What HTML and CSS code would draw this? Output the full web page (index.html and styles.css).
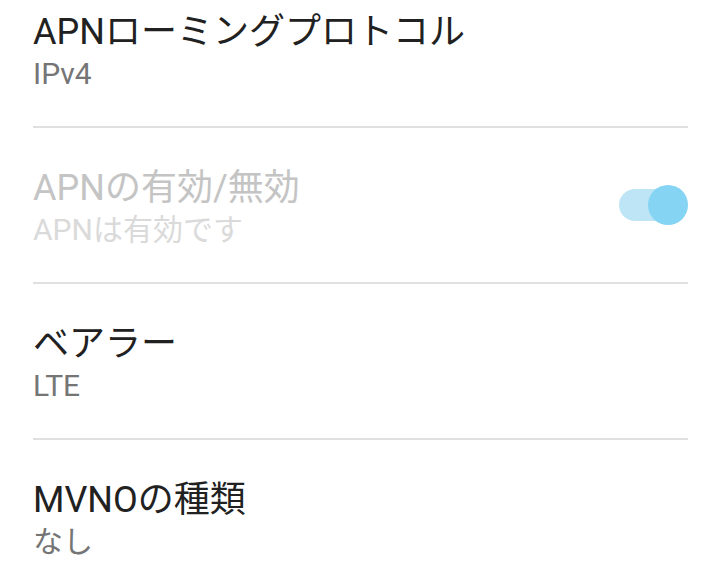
FILE: index.html
```html
<!DOCTYPE html>
<html lang="ja">
<head>
<meta charset="utf-8">
<link rel="stylesheet" href="styles.css">
</head>
<body>
<div class="list">
  <div class="row">
    <div class="text">
      <div class="title">APNローミングプロトコル</div>
      <div class="summary">IPv4</div>
    </div>
  </div>
  <div class="row disabled">
    <div class="text">
      <div class="title">APNの有効/無効</div>
      <div class="summary">APNは有効です</div>
    </div>
    <div class="switch"><span class="track"></span><span class="thumb"></span></div>
  </div>
  <div class="row">
    <div class="text">
      <div class="title">ベアラー</div>
      <div class="summary">LTE</div>
    </div>
  </div>
  <div class="row last">
    <div class="text">
      <div class="title">MVNOの種類</div>
      <div class="summary">なし</div>
    </div>
  </div>
</div>
</body>
</html>
```
FILE: styles.css
```css
html, body {
  margin: 0;
  padding: 0;
  background: #ffffff;
  overflow: hidden;
}
body {
  font-family: Roboto, "Noto Sans CJK JP", sans-serif;
}
.list {
  margin-top: -28px;
  padding: 0 32px 0 33px;
}
.row {
  height: 154px;
  border-bottom: 2px solid #e0e0e0;
  display: flex;
  align-items: center;
  justify-content: space-between;
}
.row.last {
  border-bottom: none;
}
.text {
  padding-top: 6px;
}
.title {
  font-size: 36px;
  line-height: 44px;
  color: #212121;
}
.summary {
  font-size: 30px;
  line-height: 40px;
  color: #757575;
}
.disabled .title {
  color: #c4c4c4;
}
.disabled .summary {
  color: #dadada;
}
.switch {
  position: relative;
  width: 69px;
  height: 40px;
  flex: none;
}
.track {
  position: absolute;
  left: 0;
  top: 4px;
  width: 56px;
  height: 32px;
  border-radius: 16px;
  background: #bde5f6;
}
.thumb {
  position: absolute;
  right: 0;
  top: 0;
  width: 40px;
  height: 40px;
  border-radius: 50%;
  background: #86d4f3;
}
```
